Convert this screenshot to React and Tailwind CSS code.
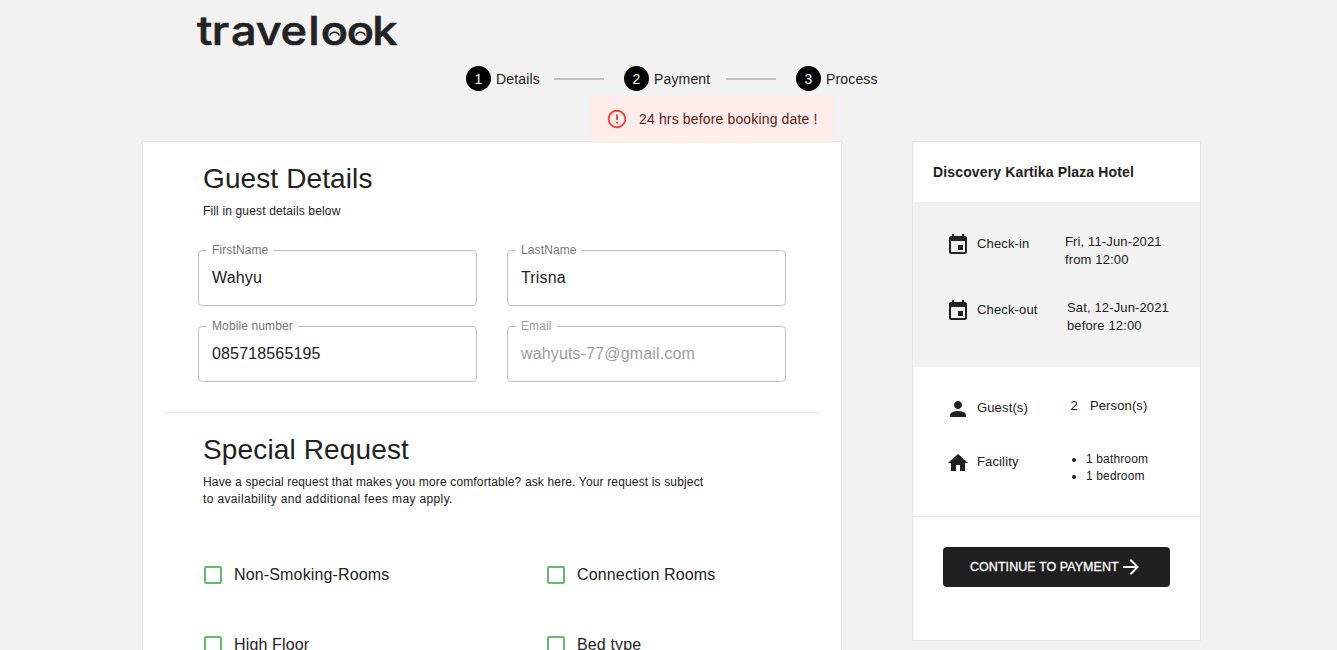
import React from "react";

function Logo() {
  return (
    <svg width="204" height="36" viewBox="0 0 204 36" className="block overflow-visible text-[#222]" aria-label="travelook">
      <text
        transform="translate(0 32.4) scale(1.13 1)"
        x="0 13 30 52 73.8 98.5 109.6 132.6 155"
        y="0"
        fill="currentColor"
        stroke="currentColor"
        strokeWidth="0.6"
        className="font-['Inter',sans-serif] text-[40px] font-medium"
      >
        travelook
      </text>
      <g fill="none" stroke="currentColor" strokeWidth="1.5">
        <path d="M132.8 22.6c1.3-4.4 8.1-4.4 9.4 0" />
        <path d="M158.8 22.6c1.3-4.4 8.1-4.4 9.4 0" />
      </g>
    </svg>
  );
}

function Step({ number, label, className }) {
  return (
    <div className={`flex items-center ${className}`}>
      <span className="flex size-[25px] items-center justify-center rounded-full bg-black text-sm text-white">{number}</span>
      <span className="ml-[5px] text-sm tracking-[0.01071em]">{label}</span>
    </div>
  );
}

function Field({ label, value, disabled }) {
  return (
    <div className="relative h-14 w-[279px] rounded-[4px] border border-[#c0c0c0] px-[13px] pt-[17px]">
      <label className={`absolute -top-[9px] left-2 bg-white px-[5px] text-xs leading-4 tracking-[0.00938em] ${disabled ? "text-[#9e9e9e]" : "text-[#757575]"}`}>
        {label}
      </label>
      <div className={`text-base leading-[19px] tracking-[0.00938em] ${disabled ? "text-[#9e9e9e]" : "text-[#212121]"}`}>{value}</div>
    </div>
  );
}

function Check({ label, className }) {
  return (
    <label className={`flex h-6 items-center ${className}`}>
      <svg viewBox="0 0 24 24" className="size-6 fill-[#66bb6a]">
        <path d="M19 5v14H5V5h14m0-2H5c-1.1 0-2 .9-2 2v14c0 1.1.9 2 2 2h14c1.1 0 2-.9 2-2V5c0-1.1-.9-2-2-2z" />
      </svg>
      <span className="ml-[9px] text-base leading-6 tracking-[0.00938em]">{label}</span>
    </label>
  );
}

const icons = {
  event: "M17 12h-5v5h5v-5zM16 1v2H8V1H6v2H5c-1.11 0-1.99.9-1.99 2L3 19c0 1.1.89 2 2 2h14c1.1 0 2-.9 2-2V5c0-1.1-.9-2-2-2h-1V1h-2zm3 18H5V8h14v11z",
  person: "M12 12c2.21 0 4-1.79 4-4s-1.79-4-4-4-4 1.79-4 4 1.79 4 4 4zm0 2c-2.67 0-8 1.34-8 4v2h16v-2c0-2.66-5.33-4-8-4z",
  home: "M10 20v-6h4v6h5v-8h3L12 3 2 12h3v8z",
};

function InfoRow({ icon, label, className, children }) {
  return (
    <div className={`flex items-start text-[13px] tracking-[0.01071em] ${className}`}>
      <svg viewBox="0 0 24 24" className="ml-[33px] size-6 fill-[#212121]">
        <path d={icons[icon]} />
      </svg>
      <span className="ml-[7px] w-[88px] pt-[2px] leading-[18px]">{label}</span>
      {children}
    </div>
  );
}

export default function App() {
  return (
    <div className="h-[650px] w-[1337px] overflow-hidden bg-[#f2f2f2] font-['Liberation_Sans',Arial,sans-serif] text-[#212121]">
      <header className="flex h-[141px] flex-col">
        <div className="h-[66px] shrink-0 pt-[13px] pl-[197px]">
          <Logo />
        </div>
        <div className="flex h-[25px] shrink-0 items-center pl-[466px]">
          <Step number="1" label="Details" className="w-[88px]" />
          <span className="h-[2px] w-[50px] bg-[#c1c0c6]" />
          <Step number="2" label="Payment" className="ml-5 w-[102px]" />
          <span className="h-[2px] w-[50px] bg-[#c1c0c6]" />
          <Step number="3" label="Process" className="ml-5" />
        </div>
        <div className="relative z-10 mt-1 ml-[590px] flex h-12 w-[244px] shrink-0 items-center rounded-[4px] bg-[#feecea] pl-4 text-sm tracking-[0.01071em] text-[#611a15]">
          <svg viewBox="0 0 24 24" className="size-[22px] fill-[#f44336]">
            <path d="M11 15h2v2h-2zm0-8h2v6h-2zm.99-5C6.47 2 2 6.48 2 12s4.47 10 9.99 10C17.52 22 22 17.52 22 12S17.52 2 11.99 2zM12 20c-4.42 0-8-3.58-8-8s3.58-8 8-8 8 3.58 8 8-3.58 8-8 8z" />
          </svg>
          <span className="ml-[11px]">24 hrs before booking date !</span>
        </div>
      </header>
      <main className="flex items-start pl-[142px]">
        <section className="h-[700px] w-[700px] border border-[#e7e7e7] bg-white">
          <div className="pt-[19px] pl-[60px]">
            <h1 className="text-[28px] leading-[35px] tracking-[0.004em]">Guest Details</h1>
            <p className="mt-[7px] text-xs leading-[17px] tracking-[0.15px]">Fill in guest details below</p>
          </div>
          <div className="mt-[30px] ml-[55px] grid w-[588px] grid-cols-2 gap-x-[30px] gap-y-5">
            <Field label="FirstName" value="Wahyu" />
            <Field label="LastName" value="Trisna" />
            <Field label="Mobile number" value="085718565195" />
            <Field label="Email" value="wahyuts-77@gmail.com" disabled />
          </div>
          <hr className="mx-5 mt-[30px] border-[#e7e7e7]" />
          <div className="pt-[19px] pl-[60px]">
            <h2 className="text-[28px] leading-[35px] tracking-[0.005em]">Special Request</h2>
            <p className="mt-[7px] w-[520px] text-xs leading-[17px] tracking-[0.15px]">
              Have a special request that makes you more comfortable? ask here. Your request is subject
              <br />
              <span className="tracking-[0.36px]">to availability and additional fees may apply.</span>
            </p>
          </div>
          <div className="mt-[55px] ml-[58px] flex flex-col gap-[46px]">
            <div className="flex">
              <Check label="Non-Smoking-Rooms" className="w-[343px]" />
              <Check label="Connection Rooms" />
            </div>
            <div className="flex">
              <Check label="High Floor" className="w-[343px]" />
              <Check label="Bed type" />
            </div>
          </div>
        </section>
        <aside className="ml-[70px] h-[500px] w-[289px] border border-[#e7e7ea] bg-white">
          <h3 className="h-[60px] pt-5 pl-5 text-sm leading-5 font-bold tracking-[0.01em]">Discovery Kartika Plaza Hotel</h3>
          <div className="h-[165px] bg-[#f2f2f2] pt-[31px]">
            <InfoRow icon="event" label="Check-in" className="h-[66px]">
              <p className="leading-[18px]">
                Fri, 11-Jun-2021
                <br />
                from 12:00
              </p>
            </InfoRow>
            <InfoRow icon="event" label="Check-out">
              <p className="pl-[2px] leading-[18px]">
                Sat, 12-Jun-2021
                <br />
                before 12:00
              </p>
            </InfoRow>
          </div>
          <div className="h-[150px] border-b border-[#e7e7ea] pt-[30px]">
            <InfoRow icon="person" label="Guest(s)" className="h-[54px]">
              <p className="flex gap-3 pl-[5.5px] leading-[18px]">
                <span>2</span>
                <span>Person(s)</span>
              </p>
            </InfoRow>
            <InfoRow icon="home" label="Facility">
              <ul className="list-disc pl-[21px] text-xs leading-[17px]">
                <li>1 bathroom</li>
                <li>1 bedroom</li>
              </ul>
            </InfoRow>
          </div>
          <button className="mt-[30px] ml-[30px] flex h-10 w-[227px] items-center rounded-[4px] bg-[#1f1f1f] pl-[27px] text-[12.5px] font-medium tracking-[0.05px] text-white [-webkit-text-stroke:0.3px_white]">
            <span className="w-[149px] text-left whitespace-nowrap">CONTINUE TO PAYMENT</span>
            <svg viewBox="0 0 24 24" className="size-6 shrink-0 fill-white">
              <path d="M12 4l-1.41 1.41L16.17 11H4v2h12.17l-5.58 5.59L12 20l8-8z" />
            </svg>
          </button>
        </aside>
      </main>
    </div>
  );
}
